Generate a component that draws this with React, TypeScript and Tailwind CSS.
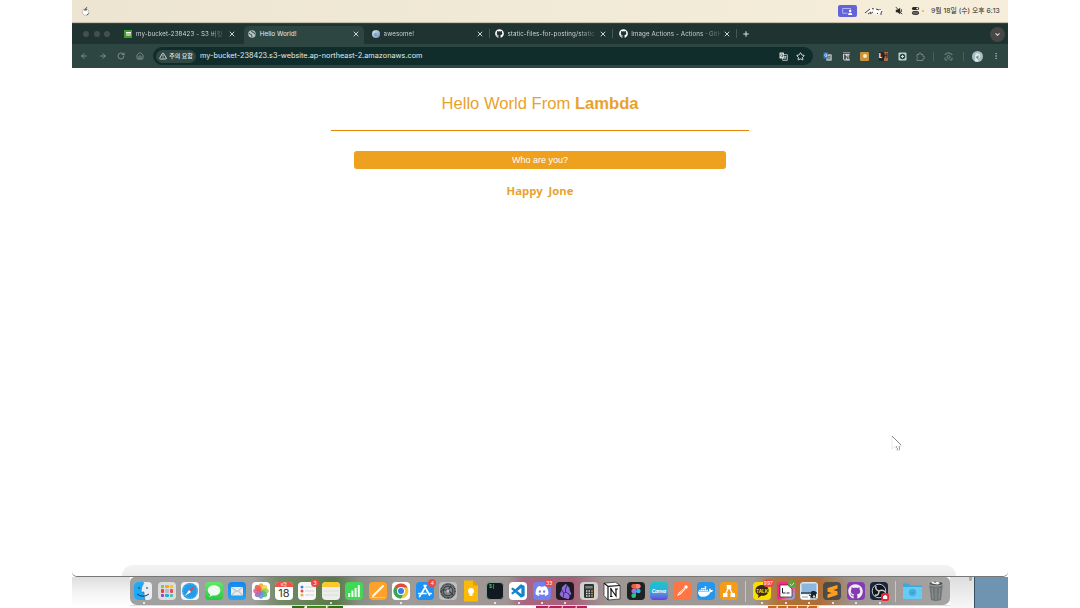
import type { ReactNode } from "react";
import { FaDiscord, FaGithub, FaDocker } from "react-icons/fa";
import { SiObsidian, SiSublimetext } from "react-icons/si";
import { BiLogoVisualStudio } from "react-icons/bi";
import { ArrowLeft, ArrowRight, RotateCw, House, TriangleAlert, Star, ChevronDown, EllipsisVertical, Plus, X } from "lucide-react";

const Divider = () => <span className="h-[9px] w-px shrink-0 bg-[#48605b]" />;

function Tab({ icon, title, active, line }: { icon: ReactNode; title: string; active?: boolean; line?: boolean }) {
  return (
    <div className="flex h-full w-[123.8px] shrink-0 items-center">
      <div className={active ? "flex h-full w-[120px] items-center rounded-t-[5px] bg-[#2d4641] pb-[3px] pl-1 pr-1" : "flex h-full w-[120px] items-center pb-[3px] pl-1 pr-1"}>
        <span className="flex w-3 shrink-0 items-center">{icon}</span>
        <span className={active ? "w-[90px] whitespace-nowrap text-[6.4px] leading-[10px] text-[#e5eceb]" : "w-[90px] whitespace-nowrap bg-linear-to-r from-[#dce5e3] from-80% to-[#3a4c49] bg-clip-text text-[6.2px] leading-[10px] tracking-[0.1px] text-transparent"}>
          {title}
        </span>
        <X className="ml-auto size-[8px] shrink-0 text-[#e5eceb]" strokeWidth={2.6} />
      </div>
      {line && <span className="mb-[3px] ml-[1px] h-[9px] w-px bg-[#445954]" />}
    </div>
  );
}

const Translate = ({ blue }: { blue?: boolean }) => (
  <svg viewBox="0 0 18 18" className="size-[9px]">
    <rect x="7" y="5" width="10" height="12" rx="1" fill={blue ? "#a9b6b4" : "#29423e"} stroke={blue ? "#a9b6b4" : "#d4dddb"} strokeWidth="1.3" />
    <path d="M10 9h5M12.5 8v1M14 9q-1 4-4 5M11 10q1 3 4 4" stroke={blue ? "#526965" : "#d4dddb"} strokeWidth="1.2" fill="none" />
    <rect x="1" y="1" width="9" height="12" rx="1" fill={blue ? "#3d78d2" : "#d4dddb"} />
    <path d="M8 5a2.6 2.6 0 1 0 .5 2H6" stroke={blue ? "#fff" : "#29423e"} strokeWidth="1.2" fill="none" />
  </svg>
);

function Dock({ children, className = "", badge, dot }: { children?: ReactNode; className?: string; badge?: string; dot?: boolean }) {
  return (
    <div className="relative flex h-7 w-[23.44px] shrink-0 items-center justify-center">
      <div className={"flex size-[18px] items-center justify-center rounded-[4px] " + className}>{children}</div>
      {badge && <span className="absolute right-0 top-[2px] flex h-2 min-w-2 items-center justify-center rounded-full bg-[#f04840] px-[1px] text-[5px] leading-none text-white">{badge}</span>}
      {dot && <span className="absolute bottom-[1px] left-[11px] size-[2px] rounded-full bg-white" />}
    </div>
  );
}

const petals = ["#f5a623", "#f8d448", "#a3cf4c", "#55b87c", "#5b9fdc", "#8e72c5", "#d762a0", "#ee5b4a"];
const pads = ["#76cf3c", "#f6a623", "#f0c419", "#ef3b36", "#b8bdc0", "#e84a5f", "#8e44c8", "#25a9e0", "#42c6a0"];

function DockIcons() {
  return (
    <>
      <Dock dot className="overflow-hidden bg-[#e8eef2]">
        <svg viewBox="0 0 18 18" className="size-[18px]"><path d="M0 0h10Q7 5 7 10h3q0 4 1 8H0z" fill="#20aaf6" /><path d="M5 5v2M13 5v2M3 12q6 4.5 12 0" stroke="#173a5d" fill="none" /><path d="M10 1Q7 5 7 10h3q0 4 1 8" stroke="#23629c" strokeWidth=".5" fill="none" /></svg>
      </Dock>
      <Dock className="bg-[#dcdcdc]">
        <span className="grid grid-cols-3 gap-[1px]">{pads.map((c) => <i key={c} className="size-[3.5px] rounded-[1px]" style={{ background: c }} />)}</span>
      </Dock>
      <Dock className="bg-[#f3f5f6]">
        <svg viewBox="0 0 18 18" className="size-[18px]"><circle cx="9" cy="9" r="8" fill="#249be8" /><circle cx="9" cy="9" r="7" fill="none" stroke="#b6e1fb" strokeWidth=".8" strokeDasharray=".5 1.3" /><path d="M14 4 8 8l2 2z" fill="#ef443b" /><path d="m4 14 4-6 2 2z" fill="#fff" /></svg>
      </Dock>
      <Dock className="bg-linear-to-b from-[#62e769] to-[#24c943]">
        <svg viewBox="0 0 18 18" className="size-[18px]"><path d="M9 3.2c-4 0-6.2 2.4-6.2 5.1 0 1.8 1 3.3 2.5 4.1L4.4 15l2.8-1.5c5 .7 8.2-1.7 8.2-5.2 0-2.7-2.4-5.1-6.4-5.1z" fill="#effbee" /></svg>
      </Dock>
      <Dock className="bg-linear-to-b from-[#1586ed] to-[#27a5f5]">
        <svg viewBox="0 0 18 18" className="size-[18px]"><rect x="3" y="5" width="12" height="8.5" rx="1" fill="#e7e9ea" /><path d="m3.5 5.5 5.5 4 5.5-4M4 13l3.5-4M14 13l-3.5-4" fill="none" stroke="#8098a7" strokeWidth=".6" /></svg>
      </Dock>
      <Dock className="bg-white">
        <svg viewBox="0 0 18 18" className="size-[18px]">{petals.map((c, i) => <ellipse key={c} cx="9" cy="5" rx="2.7" ry="3.8" fill={c} fillOpacity=".9" transform={`rotate(${i * 45} 9 9)`} />)}</svg>
      </Dock>
      <Dock className="flex-col overflow-hidden bg-white">
        <span className="h-[5px] w-full bg-[#ee5146] text-center text-[4px] leading-[5px] text-white">9월</span>
        <span className="h-[13px] text-[11px] leading-[13px] text-[#353535]">18</span>
      </Dock>
      <Dock className="bg-[#f8f8f8]" badge="3">
        <svg viewBox="0 0 18 18" className="size-[18px]"><path d="M7 5h8M7 9h9M7 13h9" stroke="#c8c8c8" strokeWidth=".8" /><circle cx="4" cy="5" r="1.5" fill="#3989df" /><circle cx="4" cy="9" r="1.5" fill="#e34c41" /><circle cx="4" cy="13" r="1.5" fill="#ebaa4b" /></svg>
      </Dock>
      <Dock dot className="overflow-hidden bg-[#ededeb]">
        <svg viewBox="0 0 18 18" className="size-[18px]"><path d="M0 0h18v5H0z" fill="#fbc92a" /><path d="M1 9h16M1 13h16" stroke="#d1d1cf" strokeWidth=".6" /></svg>
      </Dock>
      <Dock className="bg-[#42d755]">
        <svg viewBox="0 0 18 18" className="size-[18px]"><path d="M4.2 15v-4M7.4 15V8.5M10.6 15V6M13.8 15V3" stroke="#f6fff4" strokeWidth="2" /></svg>
      </Dock>
      <Dock className="bg-[#ffa12b]">
        <svg viewBox="0 0 18 18" className="size-[18px]"><path d="m4 14 10-10" stroke="#fff" strokeWidth="2" strokeLinecap="round" /><path d="M2 15.5h14" stroke="#ffd492" strokeWidth=".8" /></svg>
      </Dock>
      <Dock dot className="bg-white">
        <svg viewBox="0 0 18 18" className="size-[18px]"><circle cx="9" cy="9" r="7.5" fill="#f4c534" /><path d="M9 9 2.5 5.2A7.5 7.5 0 0 1 15.5 5.4H9z" fill="#e54a3d" /><path d="M2.5 5.2A7.5 7.5 0 0 0 9 16.5l3-5.7L9 9z" fill="#35a657" /><circle cx="9" cy="9" r="4" fill="#fff" /><circle cx="9" cy="9" r="3" fill="#357de7" /></svg>
      </Dock>
      <Dock className="bg-[#1c92f4]" badge="4"><svg viewBox="0 0 18 18" className="size-[18px]"><path d="M10 3.5 5.3 12M8.2 3.5l5.3 9.5M2.8 11.5H10m3 0h2.2M4.3 13.2l-.8 1.3" stroke="#fff" strokeWidth="1.7" strokeLinecap="round" /></svg></Dock>
      <Dock className="bg-[#b9bfc2]">
        <svg viewBox="0 0 18 18" className="size-[18px]"><circle cx="9" cy="9" r="7" fill="#858a8d" stroke="#383b3e" strokeWidth="1.8" strokeDasharray="1 .4" /><circle cx="9" cy="9" r="4.8" fill="none" stroke="#44484a" strokeWidth="1.4" /><path d="M2.5 8H9m0 0 4.7 4.6M9 8l3-4" stroke="#35393c" strokeWidth="1.2" /><circle cx="9" cy="9" r="1.4" fill="#c2c6c7" /></svg>
      </Dock>
      <Dock>
        <svg viewBox="0 0 18 22" className="h-[22px] w-[18px] shrink-0"><path d="M3 .5h8l5 5v15a1 1 0 0 1-1 1H3a1 1 0 0 1-1-1v-19a1 1 0 0 1 1-1z" fill="#fbba08" /><path d="M11 .5v5h5z" fill="#e69804" /><circle cx="9" cy="11" r="3" fill="#fff" /><path d="M7.5 12h3v4h-3z" fill="#fff" /></svg>
      </Dock>
      <Dock dot className="items-start! justify-start! border border-[#87979b] bg-[#101a20]"><span className="pl-[2px] pt-[1px] font-mono text-[5px] font-bold leading-[6px] text-[#3fc45f]">$|</span></Dock>
      <Dock dot className="bg-white"><BiLogoVisualStudio className="size-[16px] text-[#1684cb]" /></Dock>
      <Dock dot className="bg-[#7180ee]" badge="33"><FaDiscord className="size-[14px] text-white" /></Dock>
      <Dock dot className="bg-[#1d1c22]"><SiObsidian className="size-[15px] text-[#8e6ae0]" /></Dock>
      <Dock className="bg-[#cfd2cf]">
        <svg viewBox="0 0 18 18" className="size-[18px]"><rect x="4" y="2" width="10" height="14" rx="1.3" fill="#303332" /><path d="M5.3 4h7.4v2.5H5.3z" fill="#788083" /><path d="M6 9h1.5m1 0H10M6 11.5h1.5m1 0H10m-4 2.5h1.5m1 0H10" stroke="#d6d6d2" strokeWidth="1.5" /><path d="M11.2 9h1.6M11.2 11.5h1.6M11.2 14h1.6" stroke="#ee992a" strokeWidth="1.5" /></svg>
      </Dock>
      <Dock>
        <svg viewBox="0 0 18 20" className="h-5 w-[18px] shrink-0"><path d="m1 2.2 11.5-1L17 4.5V18l-12 1-4-4.5z" fill="#fff" stroke="#252525" strokeWidth=".7" /><path d="m1 2.2 4 3.2V19M5 5.4l12-.9" stroke="#111" strokeWidth="1.2" fill="none" /><path d="M8 15V8l5 7V7.5M7 8h2m3 0h3M7 15.5h2.5" fill="none" stroke="#111" strokeWidth="1.2" /></svg>
      </Dock>
      <Dock className="bg-[#1f2224]">
        <svg viewBox="0 0 12 18" className="h-[14px] w-[10px]"><path d="M6 0H3a3 3 0 0 0 0 6h3z" fill="#f1603c" /><path d="M6 0h3a3 3 0 0 1 0 6H6z" fill="#ff8370" /><path d="M6 6H3a3 3 0 0 0 0 6h3z" fill="#a46bf5" /><circle cx="9" cy="9" r="3" fill="#28b9f2" /><path d="M6 12H3a3 3 0 1 0 3 3z" fill="#23cb77" /></svg>
      </Dock>
      <Dock className="bg-linear-to-b from-[#1bc3cb] via-[#2eaedb] to-[#653de3]"><span className="font-['Lato'] text-[5.5px] font-bold italic text-white">Canva</span></Dock>
      <Dock className="bg-[#ff7544]"><svg viewBox="0 0 18 18" className="size-[18px]"><path d="m4 14 2-3.5L11 6l1.500 1L8 12z" fill="#fff" /><circle cx="13" cy="5" r="1.7" fill="#fff" /><path d="m6 12 5-5" stroke="#ff7544" strokeWidth=".6" /></svg></Dock>
      <Dock className="bg-[#2497ed]"><FaDocker className="size-[15px] text-white" /></Dock>
      <Dock className="bg-[#f59b16]">
        <svg viewBox="0 0 18 18" className="size-[18px]"><path d="M9 5 5 13m4-8 4 8" stroke="#fff" strokeWidth="1.4" /><path d="M6.7 3h4.6v4H6.7zM3 11h4.5v4H3zM10.500 11H15v4h-4.500z" fill="#fff" /></svg>
      </Dock>
      <span className="mx-[4.2px] h-[21px] w-px shrink-0 bg-[#cbc4be]" />
      <Dock dot className="bg-[#f8df00]" badge="997"><svg viewBox="0 0 18 18" className="size-[18px]"><path d="M9 3c-4 0-6.5 2.3-6.5 5.4 0 2 1.2 3.6 3 4.5L5 16l3.2-2.2c4.6.4 7.4-2.2 7.4-5.4C15.6 5.3 13 3 9 3z" fill="#3c2a1c" /><text x="9" y="10.5" fontSize="4.6" fontWeight="bold" textAnchor="middle" fill="#f8df00">TALK</text></svg></Dock>
      <Dock dot className="bg-linear-to-br from-[#fb2785] from-55% to-[#25b6ed]">
        <svg viewBox="0 0 18 18" className="size-[18px] overflow-visible"><path d="M3 3h8l4 4v8H3z" fill="#fff" stroke="#252525" strokeWidth=".7" /><path d="M5.5 6v5h3m1 0h3" fill="none" stroke="#222" /><circle cx="15" cy="2" r="4" fill="#58a63f" /><path d="m13 2 1.5 1.5L17 1" fill="none" stroke="#dbe9d2" strokeWidth=".9" /></svg>
      </Dock>
      <Dock dot className="overflow-hidden bg-[#8ab6df]">
        <svg viewBox="0 0 18 18" className="size-[18px]"><path d="M0 0h18v18H0z" fill="#e0e7ec" /><path d="M1.5 1.5h15V10h-15z" fill="#8db6df" /><path d="M1 10h16v2H1z" fill="#486174" /><path d="m1 13 4-1 4 2 3-2v5H1z" fill="#fff" /><rect x="11" y="9" width="5" height="7" rx="1.5" fill="#17242d" /><path d="m9 13 2 1v2" stroke="#17242d" fill="none" /><circle cx="14" cy="14.500" r="1.2" fill="#c7d5df" /><path d="M2 15h6M10 17h7" stroke="#829caa" /></svg>
      </Dock>
      <Dock dot className="bg-[#4b4b4a]"><SiSublimetext className="size-[13px] text-[#ff9d1c]" /></Dock>
      <Dock dot className="bg-[#843bb1]"><FaGithub className="size-[15px] text-[#f3edf6]" /></Dock>
      <Dock dot className="bg-[#18253c]">
        <svg viewBox="0 0 18 18" className="size-[18px] overflow-visible"><circle cx="9" cy="9" r="6.8" fill="#111419" stroke="#d3d8da" strokeWidth=".9" /><path d="M9 9Q5 8 6 4M9 9q4-2 6 1M9 9q0 5-4 4" stroke="#c5c9cc" strokeWidth="1.5" fill="none" /><rect x="11" y="11" width="8" height="8" rx="2.5" fill="#e82432" /><path d="M13 14h1l.5-1h1.5l.5 1h.7v3H13z" fill="#fff" /></svg>
      </Dock>
      <span className="mx-[4.2px] h-[21px] w-px shrink-0 bg-[#cbc4be]" />
      <Dock><svg viewBox="0 0 21 18" className="h-[18px] w-[21px] shrink-0"><path d="M1 1.5h6l1.5 2H19q1 0 1 1V17H1z" fill="#35aadc" /><path d="M1 5h19v12H1z" fill="#66cbf5" /><circle cx="10.5" cy="10.5" r="3.7" fill="#46afe0" /><path d="m9 10.5 1.2 1.2 2-2" stroke="#2d91c4" fill="none" /></svg></Dock>
      <Dock><svg viewBox="0 0 18 22" className="h-[22px] w-[18px] shrink-0"><path d="m2 3 2 17q5 2 10 0l2-17z" fill="#6f7475" /><ellipse cx="9" cy="3.5" rx="7" ry="2.5" fill="#4d5253" stroke="#c1c4c4" strokeWidth=".7" /><path d="M4 3q2-3 4 0 2-3 5 0l-2 1.5-4-.5z" fill="#f4f1eb" /><path d="m5 8 1 11M9 8v12m4-12-1 11" stroke="#989d9e" strokeWidth=".7" /></svg></Dock>
    </>
  );
}

export default function App() {
  return (
    <div className="h-[608px] w-[1080px] overflow-hidden bg-white px-[72px] font-['Inter','Noto_Sans_CJK_KR',sans-serif]">
      <div className="flex h-[608px] w-[936px] flex-col">
        <header className="flex h-[23px] shrink-0 items-center border-b border-[#c5bfae] bg-linear-to-r from-[#ede5d2] via-[#f1ead6] to-[#f6eedb] pl-[9px] pr-[8px]">
          <svg viewBox="0 0 10 11" className="size-[9px]"><path d="M5 3.2Q1 1.6 1 5.6q0 3.2 2.4 4.4Q5 9.4 6.6 10 9 8.4 9 6.8 7.6 5.8 8.8 4 7.4 2.2 5 3.2z" fill="#fff" stroke="#8d8a83" strokeWidth=".6" /><path d="M5 3q0-2 2-2.5M3 3.4l2 .4 2-.6M8.6 8 7 10" stroke="#222" strokeWidth="1" fill="none" /></svg>
          <div className="ml-auto flex items-center text-[#242421]">
            <span className="flex h-[12px] w-[19px] items-center justify-center rounded-[2px] bg-[#6262d9]"><svg viewBox="0 0 12 8" className="h-[7px] w-[11px]"><path d="M6 6H.5V.5h9v1.5" fill="none" stroke="#c3c1fa" /><circle cx="9" cy="3.5" r="1.4" fill="#fff" /><path d="M6.5 8q0-2.5 2.5-2.5T11.500 8z" fill="#fff" /></svg></span>
            <svg viewBox="0 0 18 9" className="ml-2 h-[9px] w-[18px]"><path d="M0 5.5 5 2l3-.5 4 .5 3 .5 3 1.500-2 1.500v3l-2-2-2 2-1-2-4-.5-2 2-1-2.500z" fill="#fff" /><path d="m0 6 5-4m2-.5 2 .5m2 0 3 1m1-1v1m2 1-1 2v2m-3-1-1-1m-4-1-3 2M6 5 3 7" fill="none" stroke="#292927" strokeWidth=".9" /></svg>
            <svg viewBox="0 0 10 10" className="ml-[12px] size-2"><path d="M1 3.500h2L6.500 1v8L3 6.500H1z" fill="#292927" /><path d="m1 0 8 9M8 3v3" stroke="#292927" strokeWidth="1.1" /></svg>
            <svg viewBox="0 0 10 9" className="ml-2 h-2 w-[9px]"><rect x="1" y="0" width="8" height="3.5" rx="1.7" fill="#292927" /><circle cx="7" cy="1.7" r="1" fill="#fff" /><rect x="1.5" y="5" width="7" height="3.3" rx="1.5" fill="#6c6961" stroke="#292927" /></svg>
            <span className="ml-[2px] size-[2px] rounded-full bg-[#f4a93d]" />
            <span className="ml-[7px] w-[69px] whitespace-nowrap text-[6.85px] leading-3">9월 18일 (수) 오후 6:13</span>
          </div>
        </header>

        <main className="relative h-[554px] shrink-0 overflow-hidden rounded-b-[5px] border-b border-[#777] bg-white">
          <div className="flex h-[21px] items-end border-t border-[#314440] bg-[#1f3330]">
            <div className="flex h-full w-[48px] items-center gap-[4.5px] pl-[11px]"><i className="size-[6px] rounded-full bg-[#454f4e]" /><i className="size-[6px] rounded-full bg-[#454f4e]" /><i className="size-[6px] rounded-full bg-[#454f4e]" /></div>
            <div className="flex h-[18px] items-center">
              <Tab icon={<span className="flex size-2 items-center justify-center bg-[#3f9a2d]"><i className="h-1 w-[5px] rounded-b-[1px] border-t border-white bg-[#a5d18d]" /></span>} title="my-bucket-238423 - S3 버킷" />
              <Tab active icon={<svg viewBox="0 0 16 16" className="size-2"><circle cx="8" cy="8" r="7.5" fill="#b7c3c1" /><path d="M2 6q2 3 5 3l1 4-2 2M6 1l2 3 4 1 1 3 2 1" fill="none" stroke="#3a504d" strokeWidth="2" /></svg>} title="Hello World!" />
              <Tab line icon={<span className="flex size-2 items-center justify-center rounded-full border-t border-dotted border-[#b7d8d4] bg-linear-to-br from-[#d8e1ff] to-[#7786c7]"><i className="size-[3px] rounded-full bg-[#71ae88]" /></span>} title="awesome!" />
              <Tab line icon={<FaGithub className="size-[9px] shrink-0 text-white" />} title="static-files-for-posting/static" />
              <Tab line icon={<FaGithub className="size-[9px] shrink-0 text-white" />} title="Image Actions - Actions · GitH" />
            </div>
            <div className="flex h-[18px] items-center pb-[3px] pl-[3px]"><Plus className="size-2 text-[#dbe4e2]" strokeWidth={3} /></div>
            <div className="ml-auto mr-[3px] flex h-full items-center"><span className="flex size-[15px] items-center justify-center rounded-full bg-[#474746]"><ChevronDown className="size-[7px] text-[#d8d8d6]" strokeWidth={3.5} /></span></div>
          </div>
          <div className="flex h-6 items-center bg-[#2d4641] text-[#7f928e]">
            <div className="flex w-[81px] shrink-0 items-center gap-[10.6px] pl-[8px]"><ArrowLeft className="size-2" strokeWidth={2.8} /><ArrowRight className="size-2" strokeWidth={2.8} /><RotateCw className="size-2" strokeWidth={2.8} /><House className="size-2" strokeWidth={2.8} /></div>
            <div className="flex h-[18px] w-[660px] shrink-0 items-center rounded-full bg-[#112d2b] pl-[3px] pr-2 text-[#e1ebe9]">
              <span className="flex h-[13px] w-10 shrink-0 items-center justify-center gap-[2px] rounded-full bg-[#304744]"><TriangleAlert className="size-2" strokeWidth={2.5} /><span className="whitespace-nowrap text-[6px] leading-2 font-medium">주의 요함</span></span>
              <span className="ml-[4px] whitespace-nowrap text-[7.32px] leading-3">my-bucket-238423.s3-website.ap-northeast-2.amazonaws.com</span>
              <span className="ml-auto flex items-center gap-2"><Translate /><Star className="size-[9px]" strokeWidth={2.5} /></span>
            </div>
            <div className="flex shrink-0 items-center gap-[9.7px] pl-[10px]">
              <Translate blue />
              <svg viewBox="0 0 18 18" className="size-[9px]"><path d="M2 1h14v16H4l-2-3z" fill="#cbd0ce" /><path d="M2 3h14M5 15V5m2 10V7l5 7V7m3-2v10" fill="none" stroke="#24302e" strokeWidth="1.5" /></svg>
              <span className="flex size-[9px] items-center justify-center rounded-[1px] bg-[#c8943d]"><i className="size-1 rounded-full bg-[#ffeaae]" /></span>
              <span className="flex size-[9px] bg-[#202929] text-[5.500px] font-bold leading-[9px]"><b className="w-1/2 text-white">L</b><b className="w-1/2 bg-[#af6c4c] text-[#3c2821]">H</b></span>
              <svg viewBox="0 0 18 18" className="size-[9px]"><rect x="1" y="1" width="16" height="16" rx="2" fill="#bed1cb" /><circle cx="9" cy="9" r="5.500" fill="#254641" /><path d="M6 9h6M9 6v6" stroke="#cae1d6" strokeWidth="2" /></svg>
              <svg viewBox="0 0 18 18" className="size-[9px]"><path d="M2 5h4V3.500a2 2 0 0 1 4 0V5h4v4h1.500a2 2 0 0 1 0 4H14v4H2v-4q3-2 0-4z" fill="none" stroke="#7f928e" strokeWidth="1.6" /></svg>
            </div>
            <span className="flex w-[38.500px] shrink-0 items-center justify-between pl-[8px]"><Divider /><svg viewBox="0 0 18 18" className="size-[9px]"><path d="M2 6V4h3l1-2h6l1 2h3v2M2 11v5h5m4 0h5v-5" fill="none" stroke="#82958f" strokeWidth="1.6" /><circle cx="9" cy="10" r="3" fill="none" stroke="#82958f" strokeWidth="1.6" /></svg><Divider /></span>
            <svg viewBox="0 0 18 18" className="ml-[8.500px] size-[11px] shrink-0"><circle cx="9" cy="9" r="9" fill="#a8bec0" /><path d="M5 17V9q0-6 5-5 5 1 3 6l-3 3v4z" fill="#e1e8e7" /><path d="m6 10 5-3-1 7z" fill="#619396" /></svg>
            <EllipsisVertical className="ml-[8.500px] size-2 shrink-0 text-[#a0b2ae]" strokeWidth={2.5} />
          </div>

          <section className="flex flex-col items-center pt-[26px] font-['Liberation_Sans',sans-serif] text-[#e9a22d]">
            <h1 className="whitespace-nowrap text-[16.6px] leading-5">Hello World From <strong>Lambda</strong></h1>
            <hr className="mt-[16px] h-px w-[418px] border-0 bg-[#e5830b]" />
            <button className="mt-5 h-[18px] w-[372px] rounded-[3px] bg-[#eea11e] text-[9px] leading-[18px] text-white">Who are you?</button>
            <p className="mt-[14px] whitespace-pre font-['Open_Sans',sans-serif] text-[11.3px] leading-4 font-bold">Happy  Jone</p>
          </section>
          <svg viewBox="0 0 12 18" className="absolute left-[819px] top-[412px] h-[18px] w-3"><path d="M1 1v13l3-3 2 5 3-1-2-4h4z" fill="#fff" stroke="#ddd" strokeWidth=".7" /><path d="m1 1 9 9" stroke="#777" strokeWidth=".9" /><path d="M5 12h1m2 0h1m-3 2h1m1 0h1" stroke="#555" /></svg>
          <div className="absolute bottom-0 left-[50px] h-[11px] w-[834px] rounded-t-[18px] bg-linear-to-b from-[#f3f3f3] to-[#ebebeb]" />
        </main>

        <footer className="relative flex h-[31px] shrink-0 bg-white">
          <div className="h-[31px] w-[58px] bg-linear-to-b from-[#dedede] via-[#f4f4f4] to-white" />
          <div className="flex w-[820px] flex-col">
            <div className="flex h-7 items-center rounded-b-[7px] rounded-t-[5px] bg-[linear-gradient(90deg,#a0a0a0_0%,#a0a0a0_15%,#758a68_18%,#587948_25%,#8b8e85_28%,#a09b98_33%,#9e9693_46%,#a66682_48%,#a66179_54%,#9e9693_58%,#a09a96_76%,#af733b_79%,#ad6c35_84%,#9d948e_88%,#a5a5a5_100%)] pl-[1.6px]"><DockIcons /></div>
            <div className="flex h-[3px] border-t border-[#ddd]"><i className="ml-[162px] h-[3px] w-[51px] bg-[linear-gradient(100deg,#27730e_0%,#27730e_24%,#f0f4ed_25%,#f0f4ed_29%,#338e14_30%,#338e14_66%,white_67%,#27730e_72%)]" /><i className="ml-[193px] h-[3px] w-[51px] bg-[repeating-linear-gradient(110deg,#ba1e5c_0_11px,#f5a6c3_12px_13px)]" /><i className="ml-[181px] h-[3px] w-[51px] bg-[repeating-linear-gradient(100deg,#cb6815_0_8px,#ffe1bb_9px_10px)]" /></div>
          </div>
          <div className="flex flex-1 justify-end bg-linear-to-b from-[#dedede] to-[#f7f7f7] pr-[2px]"><i className="h-1 w-[3px] rounded-b-full bg-[#aaa]" /></div>
          <div className="w-[34px] border-l border-[#365063] bg-[#6e94b2]" />
        </footer>
      </div>
    </div>
  );
}
